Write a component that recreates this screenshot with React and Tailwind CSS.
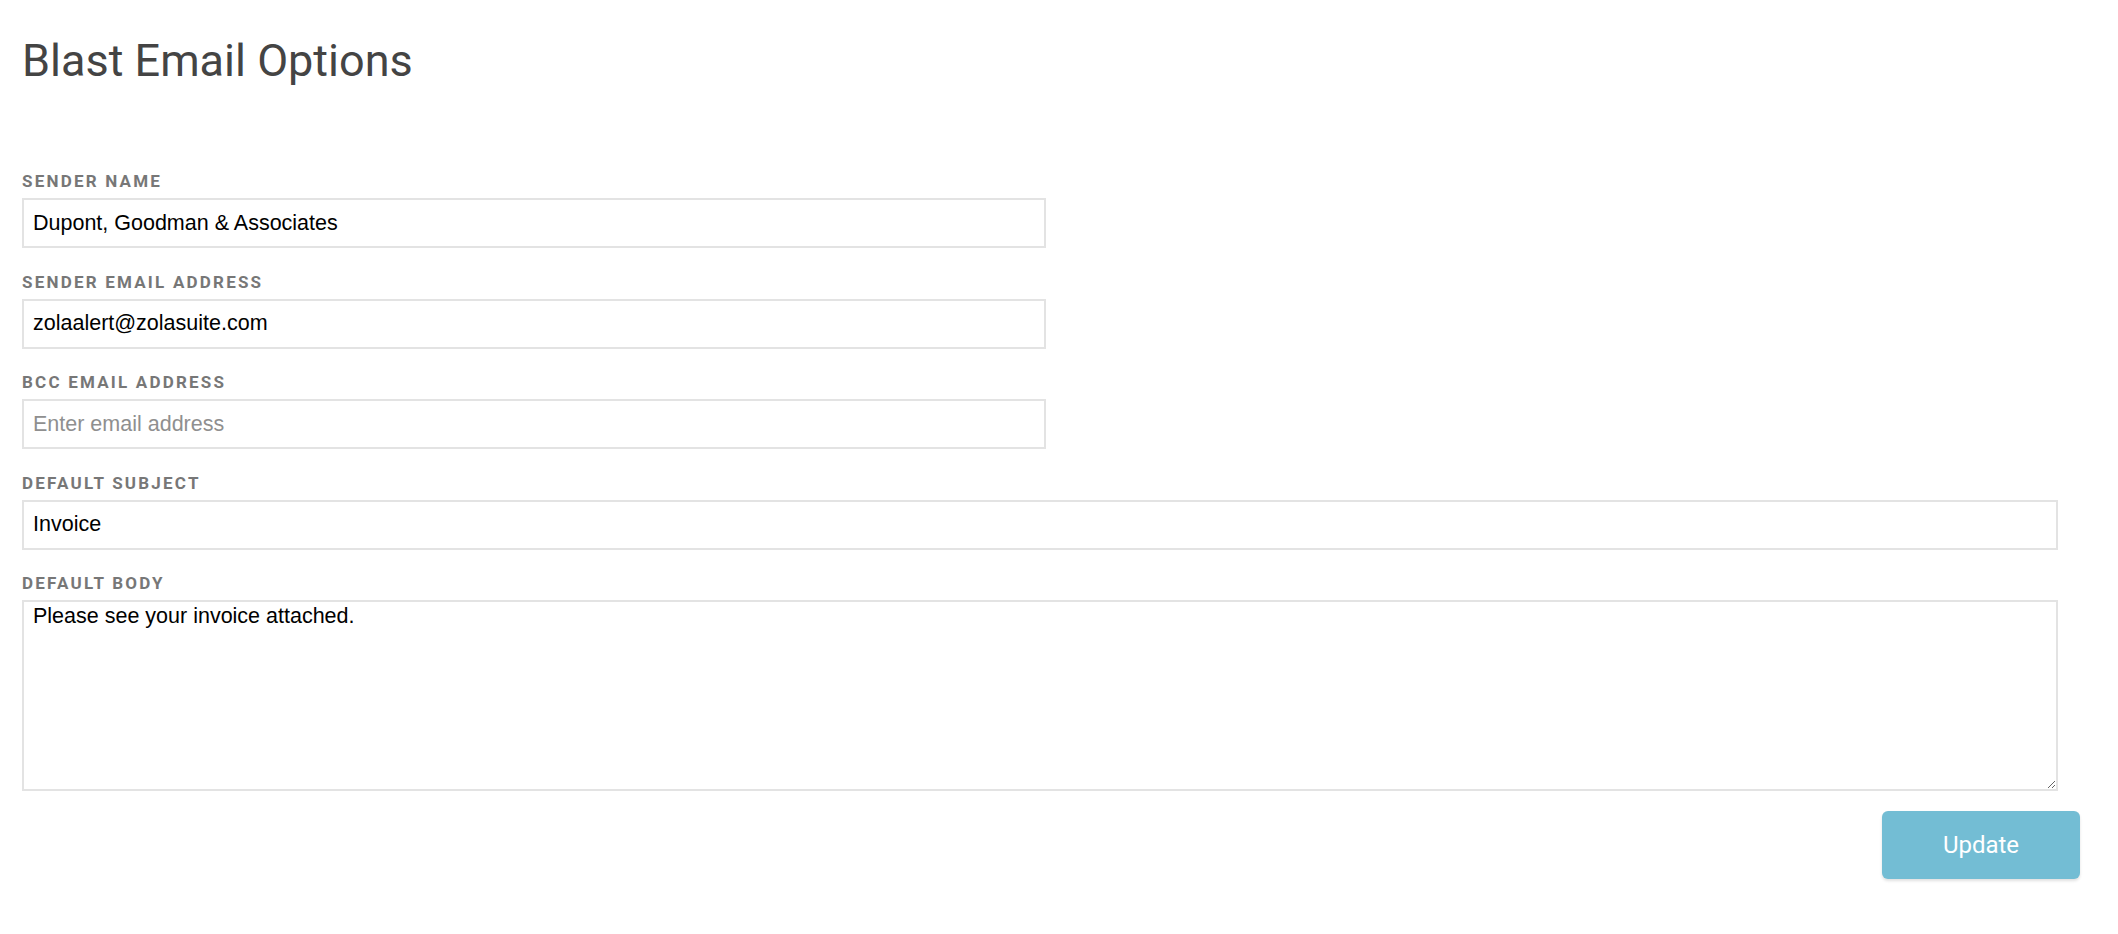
import React, { useState } from 'react';

const labelCls = "block font-['Roboto',sans-serif] text-[17px] leading-[15px] font-bold tracking-[0.13em] text-[#777777] uppercase mb-[9px]";
const inputCls = "block h-[50px] border-2 border-[#e3e3e3] bg-white pl-[9px] pr-3 font-['Liberation_Sans',Arial,sans-serif] text-[21.5px] text-black placeholder:text-[#8f8f8f] outline-none";

function Field({ label, children }) {
    return (
        <div className="mb-[26.5px]">
            <label className={labelCls}>{label}</label>
            {children}
        </div>
    );
}

export default function App() {
    const [form, setForm] = useState({
        senderName: 'Dupont, Goodman & Associates',
        senderEmail: 'zolaalert@zolasuite.com',
        bcc: '',
        subject: 'Invoice',
        body: 'Please see your invoice attached.',
    });

    const set = (key) => (e) => setForm({ ...form, [key]: e.target.value });

    return (
        <div className="min-h-screen bg-white pl-[22px] pr-[38px] pt-[38px] font-['Roboto',sans-serif]">
            <h1 className="text-[45px] leading-none font-normal text-[#444444] mb-[91px]">Blast Email Options</h1>

            <Field label="Sender Name">
                <input className={`${inputCls} w-[1024px]`} value={form.senderName} onChange={set('senderName')} />
            </Field>
            <Field label="Sender Email Address">
                <input className={`${inputCls} w-[1024px]`} value={form.senderEmail} onChange={set('senderEmail')} />
            </Field>
            <Field label="BCC Email Address">
                <input className={`${inputCls} w-[1024px]`} placeholder="Enter email address" value={form.bcc} onChange={set('bcc')} />
            </Field>
            <Field label="Default Subject">
                <input className={`${inputCls} w-[2036px]`} value={form.subject} onChange={set('subject')} />
            </Field>

            <div>
                <label className={labelCls}>Default Body</label>
                <textarea
                    className="block w-[2036px] h-[191px] border-2 border-[#e3e3e3] bg-white pl-[9px] pr-3 pt-[2px] font-['Liberation_Sans',Arial,sans-serif] text-[21.5px] leading-[24px] text-black outline-none resize"
                    value={form.body}
                    onChange={set('body')}
                />
            </div>

            <div className="flex justify-end mt-[20px]">
                <button className="w-[198px] h-[68px] rounded-[6px] bg-[#73bdd4] text-white text-[24px] shadow-[0_2px_3px_rgba(0,0,0,0.12)]">
                    Update
                </button>
            </div>
        </div>
    );
}
